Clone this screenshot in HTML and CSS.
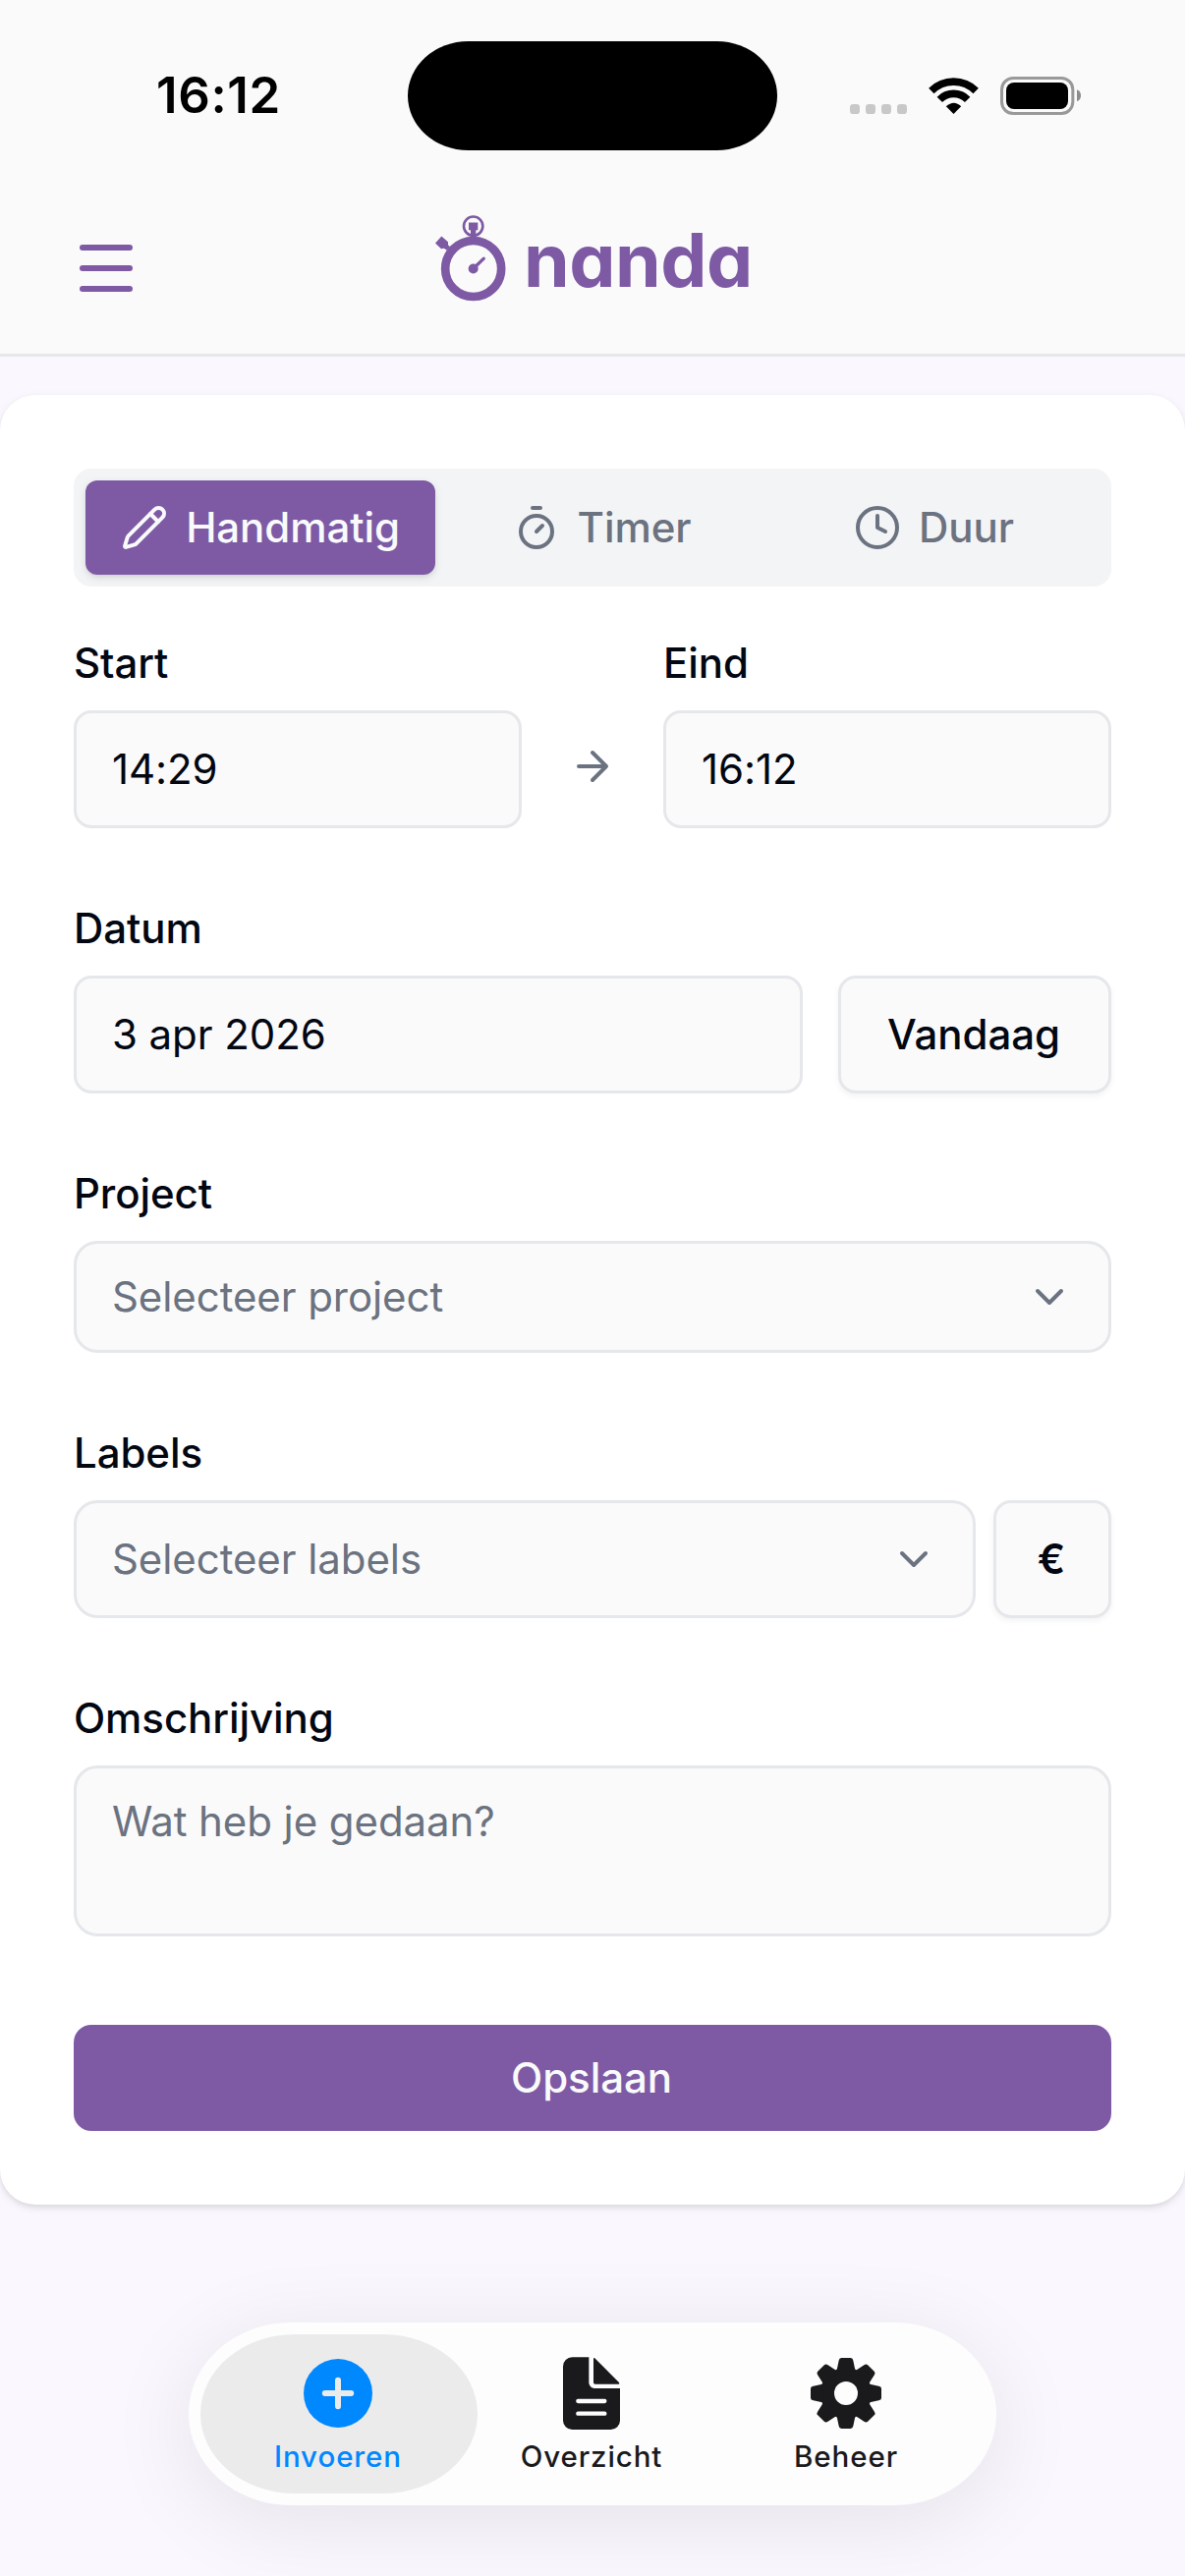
FILE: index.html
```html
<!DOCTYPE html>
<html lang="nl">
<head>
    <meta charset="UTF-8">
    <meta name="viewport" content="width=device-width, initial-scale=1.0">
    <title>nanda</title>
    <link rel="stylesheet" href="styles.css">
</head>
<body>
    <header class="header">
        <div class="status-bar">
            <div class="status-time">16:12</div>
            <div class="island"></div>
            <svg class="status-icons" viewBox="75 54 705 117">
                <g fill="#c8c8c8">
                    <rect x="75" y="138" width="30" height="30" rx="10"/>
                    <rect x="123" y="138" width="30" height="30" rx="10"/>
                    <rect x="171" y="138" width="30" height="30" rx="10"/>
                    <rect x="219" y="138" width="30" height="30" rx="10"/>
                </g>
                <g fill="none" stroke="#000" stroke-width="23">
                    <path d="M323.500 97.500a96 96 0 0 1 136 0"/>
                    <path d="M349 124a60 60 0 0 1 85 0"/>
                </g>
                <path d="M391.500 168l-23-23q24-22 46 0z"/>
                <rect x="538.500" y="58.500" width="217" height="108" rx="35" fill="none" stroke="#999" stroke-width="9"/>
                <rect x="552" y="72" width="189" height="81" rx="24"/>
                <path d="M768 94q12 5 12 18t-12 18z" fill="#8c8c8c"/>
            </svg>
        </div>
        <div class="app-bar">
            <div class="menu-button">
                <span></span>
                <span></span>
                <span></span>
            </div>
            <div class="logo">
                <svg class="logo-icon" viewBox="69 56 219 263" fill="none" stroke="#7e5aa5">
                    <circle cx="185" cy="219" r="85.500" stroke-width="26"/>
                    <circle cx="185" cy="89" r="29" stroke-width="8"/>
                    <path d="M171 78h28v23h-6v20h-16v-20h-6z" fill="#7e5aa5" stroke="none"/>
                    <path d="M88 120l20 17v9l6 6-10 11-8-6-9 1-18-17z" fill="#7e5aa5" stroke="none"/>
                    <circle cx="185" cy="219" r="15" fill="#7e5aa5" stroke="none"/>
                    <path d="M185 219l32-31" stroke-width="10" stroke-linecap="round"/>
                </svg>
                <span class="logo-text">nanda</span>
            </div>
        </div>
    </header>

    <main class="card">
        <div class="tabs">
            <div class="tab active">
                <svg class="icon" viewBox="0 0 24 24"><path d="M21.174 6.812a1 1 0 0 0-3.986-3.987L3.842 16.174a2 2 0 0 0-.5.83l-1.321 4.352a.5.5 0 0 0 .623.622l4.353-1.320a2 2 0 0 0 .83-.497z"/><path d="m15 5 4 4"/></svg>
                <span>Handmatig</span>
            </div>
            <div class="tab">
                <svg class="icon" viewBox="0 0 24 24"><path d="M10 2h4M12 14l3-3"/><circle cx="12" cy="14" r="8"/></svg>
                <span>Timer</span>
            </div>
            <div class="tab">
                <svg class="icon" viewBox="0 0 24 24"><circle cx="12" cy="12" r="10"/><path d="M12 6v6l4 2"/></svg>
                <span>Duur</span>
            </div>
        </div>

        <div class="row time-row">
            <div class="group">
                <div class="label">Start</div>
                <div class="field">14:29</div>
            </div>
            <svg class="icon arrow" viewBox="0 0 24 24"><path d="M5 12h14M12 5l7 7-7 7"/></svg>
            <div class="group">
                <div class="label">Eind</div>
                <div class="field">16:12</div>
            </div>
        </div>

        <div class="group">
            <div class="label">Datum</div>
            <div class="row date-row">
                <div class="field">3 apr 2026</div>
                <div class="button">Vandaag</div>
            </div>
        </div>

        <div class="group">
            <div class="label">Project</div>
            <div class="field select project">
                <span>Selecteer project</span>
                <svg class="icon" viewBox="0 0 24 24"><path d="m6 9 6 6 6-6"/></svg>
            </div>
        </div>

        <div class="group">
            <div class="label">Labels</div>
            <div class="row labels-row">
                <div class="field select">
                    <span>Selecteer labels</span>
                    <svg class="icon" viewBox="0 0 24 24"><path d="m6 9 6 6 6-6"/></svg>
                </div>
                <div class="button euro">€</div>
            </div>
        </div>

        <div class="group">
            <div class="label">Omschrijving</div>
            <div class="field textarea">Wat heb je gedaan?</div>
        </div>

        <div class="submit">Opslaan</div>
    </main>

    <nav class="nav">
        <div class="nav-item active">
            <svg viewBox="-37 -37 74 74">
                <circle r="35" fill="#0088ff"/>
                <path d="M-13.200 0h26.400M0-13.200v26.400" stroke="#ebebec" stroke-width="6" stroke-linecap="round"/>
            </svg>
            <span>Invoeren</span>
        </div>
        <div class="nav-item">
            <svg viewBox="-24 -1 222 222">
                <path d="M28 0h51v78a17 17 0 0 0 17 17h78v98a28 28 0 0 1-28 28H28a28 28 0 0 1-28-28V28A28 28 0 0 1 28 0z"/>
                <path d="M93 4q0-4 4-1l74 74q3 5-1 5H98q-5 0-5-5z"/>
                <path d="M46 134h81M46 172h81" stroke="#fdfdfe" stroke-width="13" stroke-linecap="round"/>
            </svg>
            <span>Overzicht</span>
        </div>
        <div class="nav-item">
            <svg viewBox="-111 -111 222 222">
                <defs>
                    <path id="tooth" d="M-14-108h28q7 0 8 8l5 24q1 7 10 9H-37q9-2 10-9l5-24q1-8 8-8z"/>
                </defs>
                <circle r="77"/>
                <use href="#tooth"/>
                <use href="#tooth" transform="rotate(45)"/>
                <use href="#tooth" transform="rotate(90)"/>
                <use href="#tooth" transform="rotate(135)"/>
                <use href="#tooth" transform="rotate(180)"/>
                <use href="#tooth" transform="rotate(225)"/>
                <use href="#tooth" transform="rotate(270)"/>
                <use href="#tooth" transform="rotate(315)"/>
                <circle r="36" fill="#fdfdfe"/>
            </svg>
            <span>Beheer</span>
        </div>
    </nav>
</body>
</html>
```

FILE: styles.css
```css
* {
    box-sizing: border-box;
}

body {
    font-family: 'Inter', sans-serif;
    font-optical-sizing: none;
    font-size: 42px;
    line-height: 60px;
    letter-spacing: -0.08px;
    margin: 0;
    min-height: 100vh;
    background-color: #faf8fe;
    color: #030712;
    overflow: hidden;
}

.header {
    height: 363px;
    background-color: #fafafa;
    border-bottom: 3px solid #e5e7eb;
}

/* Status bar */
.status-bar {
    display: grid;
    grid-template-columns: 415px 376px 415px;
    align-items: center;
    height: 153px;
    padding-top: 41px;
}

.status-time {
    padding-left: 159px;
    font-size: 51px;
    font-weight: 600;
    letter-spacing: 0.6px;
    color: #000;
}

.island {
    height: 111px;
    border-radius: 62px / 56px;
    background-color: #000;
}

.status-icons {
    width: 235px;
    height: 39px;
    margin-left: 74px;
}

.app-bar {
    display: grid;
    grid-template-columns: 1fr auto 1fr;
    align-items: start;
    padding: 66px 81px 0;
}

.menu-button {
    display: flex;
    flex-direction: column;
    gap: 15px;
    width: 54px;
    margin-top: 30px;
}

.menu-button span {
    height: 6px;
    border-radius: 3px;
    background-color: #7e5aa5;
}

.logo {
    display: flex;
    width: 320px;
}

.logo-icon {
    width: 73px;
    height: 88px;
    flex-shrink: 0;
}

.logo-text {
    margin: 16px 0 0 17px;
    font-size: 75px;
    font-weight: 680;
    letter-spacing: -0.5px;
    font-feature-settings: "cv11";
    color: #7e5aa5;
}

/* Form card */
.card {
    margin-top: 39px;
    height: 1842px;
    padding: 75px;
    border-radius: 36px;
    background-color: #fff;
    box-shadow: 0 3px 9px rgba(0, 0, 0, 0.1), 0 3px 6px -3px rgba(0, 0, 0, 0.1);
}

.icon {
    width: 48px;
    height: 48px;
    flex-shrink: 0;
    fill: none;
    stroke: currentColor;
    stroke-width: 2;
    stroke-linecap: round;
    stroke-linejoin: round;
}

.tabs {
    display: grid;
    grid-template-columns: 356fr 339fr 337fr;
    height: 120px;
    padding: 12px;
    margin-bottom: 48px;
    border-radius: 18px;
    background-color: #f3f4f6;
}

.tab {
    display: flex;
    align-items: center;
    justify-content: center;
    gap: 18px;
    border-radius: 12px;
    font-weight: 500;
    color: #6b7280;
}

.tab.active {
    background-color: #7e5aa5;
    color: #f9fafb;
    box-shadow: 0 3px 9px rgba(0, 0, 0, 0.1), 0 3px 6px -3px rgba(0, 0, 0, 0.1);
}

.row {
    display: flex;
}

.time-row {
    gap: 48px;
    margin-bottom: 72px;
}

.time-row .group {
    flex: 1;
    margin-bottom: 0;
}

.arrow {
    margin-top: 111px;
    color: #6b7280;
}

.group {
    margin-bottom: 72px;
}

.label {
    margin-bottom: 18px;
    font-weight: 500;
}

.field {
    display: flex;
    align-items: center;
    flex: 1;
    height: 120px;
    padding: 0 36px;
    border: 3px solid #e5e7eb;
    border-radius: 18px;
    background-color: #fafafa;
}

.select {
    justify-content: space-between;
    border-radius: 24px;
    color: #6b7280;
}

.project {
    height: 114px;
}

.textarea {
    align-items: flex-start;
    height: 174px;
    padding-top: 24px;
    border-radius: 24px;
    color: #6b7280;
}

.button {
    display: flex;
    align-items: center;
    justify-content: center;
    width: 278px;
    height: 120px;
    padding-right: 2px;
    border: 3px solid #e5e7eb;
    border-radius: 18px;
    background-color: #fafafa;
    font-weight: 500;
    box-shadow: 0 3px 6px rgba(0, 0, 0, 0.05);
}

.date-row {
    gap: 36px;
}

.labels-row {
    gap: 18px;
}

.euro {
    width: 120px;
    font-weight: 600;
}

.submit {
    display: flex;
    align-items: center;
    justify-content: center;
    height: 108px;
    margin-top: 90px;
    padding-right: 2px;
    border-radius: 18px;
    background-color: #7e5aa5;
    color: #f9fafb;
    font-weight: 500;
}

/* Bottom navigation */
.nav {
    display: flex;
    width: 822px;
    height: 186px;
    margin: 120px auto 0;
    padding: 12px;
    border-radius: 104px / 93px;
    background-color: #fdfdfe;
    box-shadow: 0 15px 90px rgba(0, 0, 0, 0.09);
}

.nav-item {
    display: flex;
    flex-direction: column;
    align-items: center;
    width: 282px;
    flex-shrink: 0;
    padding: 23px 2px 0 0;
    border-radius: 96px / 81px;
    font-size: 29.5px;
    font-weight: 500;
    line-height: 36px;
    letter-spacing: 0.9px;
    color: #1a1a1c;
    fill: #1a1a1c;
}

.nav-item + .nav-item {
    margin-left: -24px;
}

.nav-item:last-child {
    padding-right: 0;
}

.nav-item.active {
    background-color: #ebebec;
    color: #0088ff;
}

.nav-item svg {
    width: 74px;
    height: 74px;
    margin-bottom: 9px;
}
```
